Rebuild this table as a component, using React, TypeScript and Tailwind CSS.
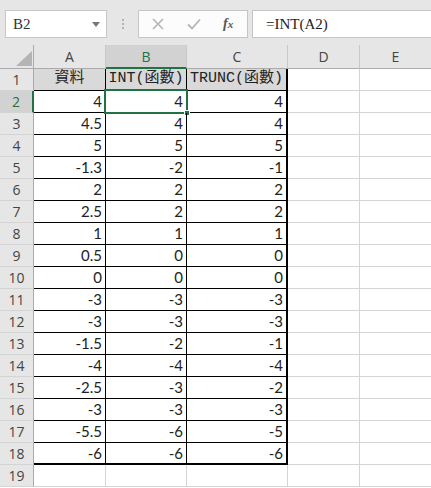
import React from "react"

const A = ["4", "4.5", "5", "-1.3", "2", "2.5", "1", "0.5", "0", "-3", "-3", "-1.5", "-4", "-2.5", "-3", "-5.5", "-6"]
const B = ["4", "4", "5", "-2", "2", "2", "1", "0", "0", "-3", "-3", "-2", "-4", "-3", "-3", "-6", "-6"]
const C = ["4", "4", "5", "-1", "2", "2", "1", "0", "0", "-3", "-3", "-1", "-4", "-2", "-3", "-5", "-6"]

const num = { fontFamily: "Lato, 'Liberation Sans', sans-serif" }
const ming = { fontFamily: "'Liberation Mono', 'Noto Sans CJK TC', monospace" }
const serif = { fontFamily: "'Liberation Serif', serif" }
const ui = { fontFamily: "'Open Sans', 'Liberation Sans', sans-serif" }

function RowHead({ n, active }: { n: number; active?: boolean }) {
  return (
    <div
      style={ui}
      className={
        "w-[34px] shrink-0 flex items-center justify-center text-[14px] border-b border-b-[#d4d4d4] " +
        (active
          ? "bg-[#d2d2d2] text-[#217346] border-r-2 border-r-[#217346]"
          : "bg-[#e6e6e6] text-[#444] border-r border-r-[#ababab]")
      }
    >
      {n}
    </div>
  )
}

function EmptyCells() {
  return (
    <>
      <div className="w-[72px] shrink-0 border-r border-b border-[#d4d4d4]" />
      <div className="flex-1 border-b border-[#d4d4d4]" />
    </>
  )
}

export default function App() {
  return (
    <div className="w-[431px] h-[488px] overflow-hidden bg-white text-[#222]">
      {/* formula bar */}
      <div className="h-[45px] bg-[#e6e6e6] flex items-start pt-[10px] pl-[5px]">
        <div className="w-[102px] h-[28px] bg-white border border-[#c6c6c6] flex items-center justify-between pl-[7px] pr-[6px]">
          <span style={serif} className="text-[15px] text-[#333]">B2</span>
          <svg width="8" height="5" viewBox="0 0 8 5"><path d="M0 0h8L4 5z" fill="#777" /></svg>
        </div>
        <div className="w-[31px] h-[28px] flex flex-col items-center justify-center gap-[2px]">
          <span className="w-[2px] h-[2px] bg-[#b3b3b3]" />
          <span className="w-[2px] h-[2px] bg-[#b3b3b3]" />
          <span className="w-[2px] h-[2px] bg-[#b3b3b3]" />
        </div>
        <div className="w-[110px] h-[28px] bg-[#fcfcfc] border border-[#c6c6c6] flex items-center">
          <svg className="ml-[13px]" width="12" height="12" viewBox="0 0 12 12">
            <path d="M1 1l10 10M11 1L1 11" stroke="#b5b5b5" strokeWidth="1.6" />
          </svg>
          <svg className="ml-[23px]" width="14" height="12" viewBox="0 0 14 12">
            <path d="M1 6.5l4 4L13 1.5" stroke="#b5b5b5" strokeWidth="1.8" fill="none" />
          </svg>
          <span style={serif} className="ml-[22px] italic font-bold text-[14px] text-[#555] leading-none">
            f<span className="text-[11px]">x</span>
          </span>
        </div>
        <div className="ml-[4px] flex-1 h-[28px] bg-white border border-[#c6c6c6] border-r-0 flex items-center pl-[13px]">
          <span style={serif} className="text-[15px] text-[#222]">=INT(A2)</span>
        </div>
      </div>

      {/* column headers */}
      <div style={ui} className="h-[24px] flex text-[14px] text-[#444]">
        <div className="w-[34px] shrink-0 bg-[#e6e6e6] border-r border-b border-[#ababab] flex items-end justify-end pr-[1px] pb-[2px]">
          <svg width="16" height="15" viewBox="0 0 16 15"><path d="M16 0V15H0z" fill="#b4b4b4" /></svg>
        </div>
        <div className="w-[72px] shrink-0 bg-[#e6e6e6] border-r border-r-[#c8c8c8] border-b border-b-[#ababab] flex items-center justify-center">A</div>
        <div className="w-[81px] shrink-0 bg-[#d2d2d2] border-r border-r-[#c8c8c8] border-b-2 border-b-[#217346] flex items-center justify-center text-[#217346]">B</div>
        <div className="w-[101px] shrink-0 bg-[#e6e6e6] border-r border-r-[#c8c8c8] border-b border-b-[#ababab] flex items-center justify-center">C</div>
        <div className="w-[72px] shrink-0 bg-[#e6e6e6] border-r border-r-[#c8c8c8] border-b border-b-[#ababab] flex items-center justify-center">D</div>
        <div className="flex-1 bg-[#e6e6e6] border-b border-b-[#ababab] flex items-center justify-center">E</div>
      </div>

      {/* row 1 */}
      <div className="h-[22px] flex">
        <RowHead n={1} />
        <div style={ming} className="w-[72px] shrink-0 bg-[#d9d9d9] border-r border-b border-black flex items-center justify-center text-[15px]">資料</div>
        <div style={ming} className="w-[81px] shrink-0 bg-[#d9d9d9] border-r border-b border-black flex items-center justify-center text-[15px]">INT(函數)</div>
        <div style={ming} className="w-[101px] shrink-0 bg-[#d9d9d9] border-r-2 border-b border-black flex items-center justify-center text-[15px]">TRUNC(函數)</div>
        <EmptyCells />
      </div>

      {A.map((a, i) => {
        const last = i === A.length - 1
        const bb = last ? "border-b-2" : "border-b"
        return (
          <div key={i} className="h-[22px] flex">
            <RowHead n={i + 2} active={i === 0} />
            <div style={num} className={"w-[72px] shrink-0 border-r border-black flex items-center justify-end pr-[3px] text-[15px] " + bb}>{a}</div>
            <div style={num} className={"relative w-[81px] shrink-0 border-r border-black flex items-center justify-end pr-[3px] text-[15px] " + bb}>
              {B[i]}
              {i === 0 && (
                <>
                  <div className="absolute -left-[2px] -top-[2px] -right-[2px] -bottom-[2px] border-2 border-[#217346]" />
                  <div className="absolute -right-[4px] -bottom-[4px] w-[6px] h-[6px] bg-[#217346] border border-white" />
                </>
              )}
            </div>
            <div style={num} className={"w-[101px] shrink-0 border-r-2 border-black flex items-center justify-end pr-[3px] text-[15px] " + bb}>{C[i]}</div>
            <EmptyCells />
          </div>
        )
      })}

      {/* row 19 */}
      <div className="h-[22px] flex">
        <RowHead n={19} />
        <div className="w-[72px] shrink-0 border-r border-b border-[#d4d4d4]" />
        <div className="w-[81px] shrink-0 border-r border-b border-[#d4d4d4]" />
        <div className="w-[101px] shrink-0 border-r border-b border-[#d4d4d4]" />
        <EmptyCells />
      </div>
    </div>
  )
}
